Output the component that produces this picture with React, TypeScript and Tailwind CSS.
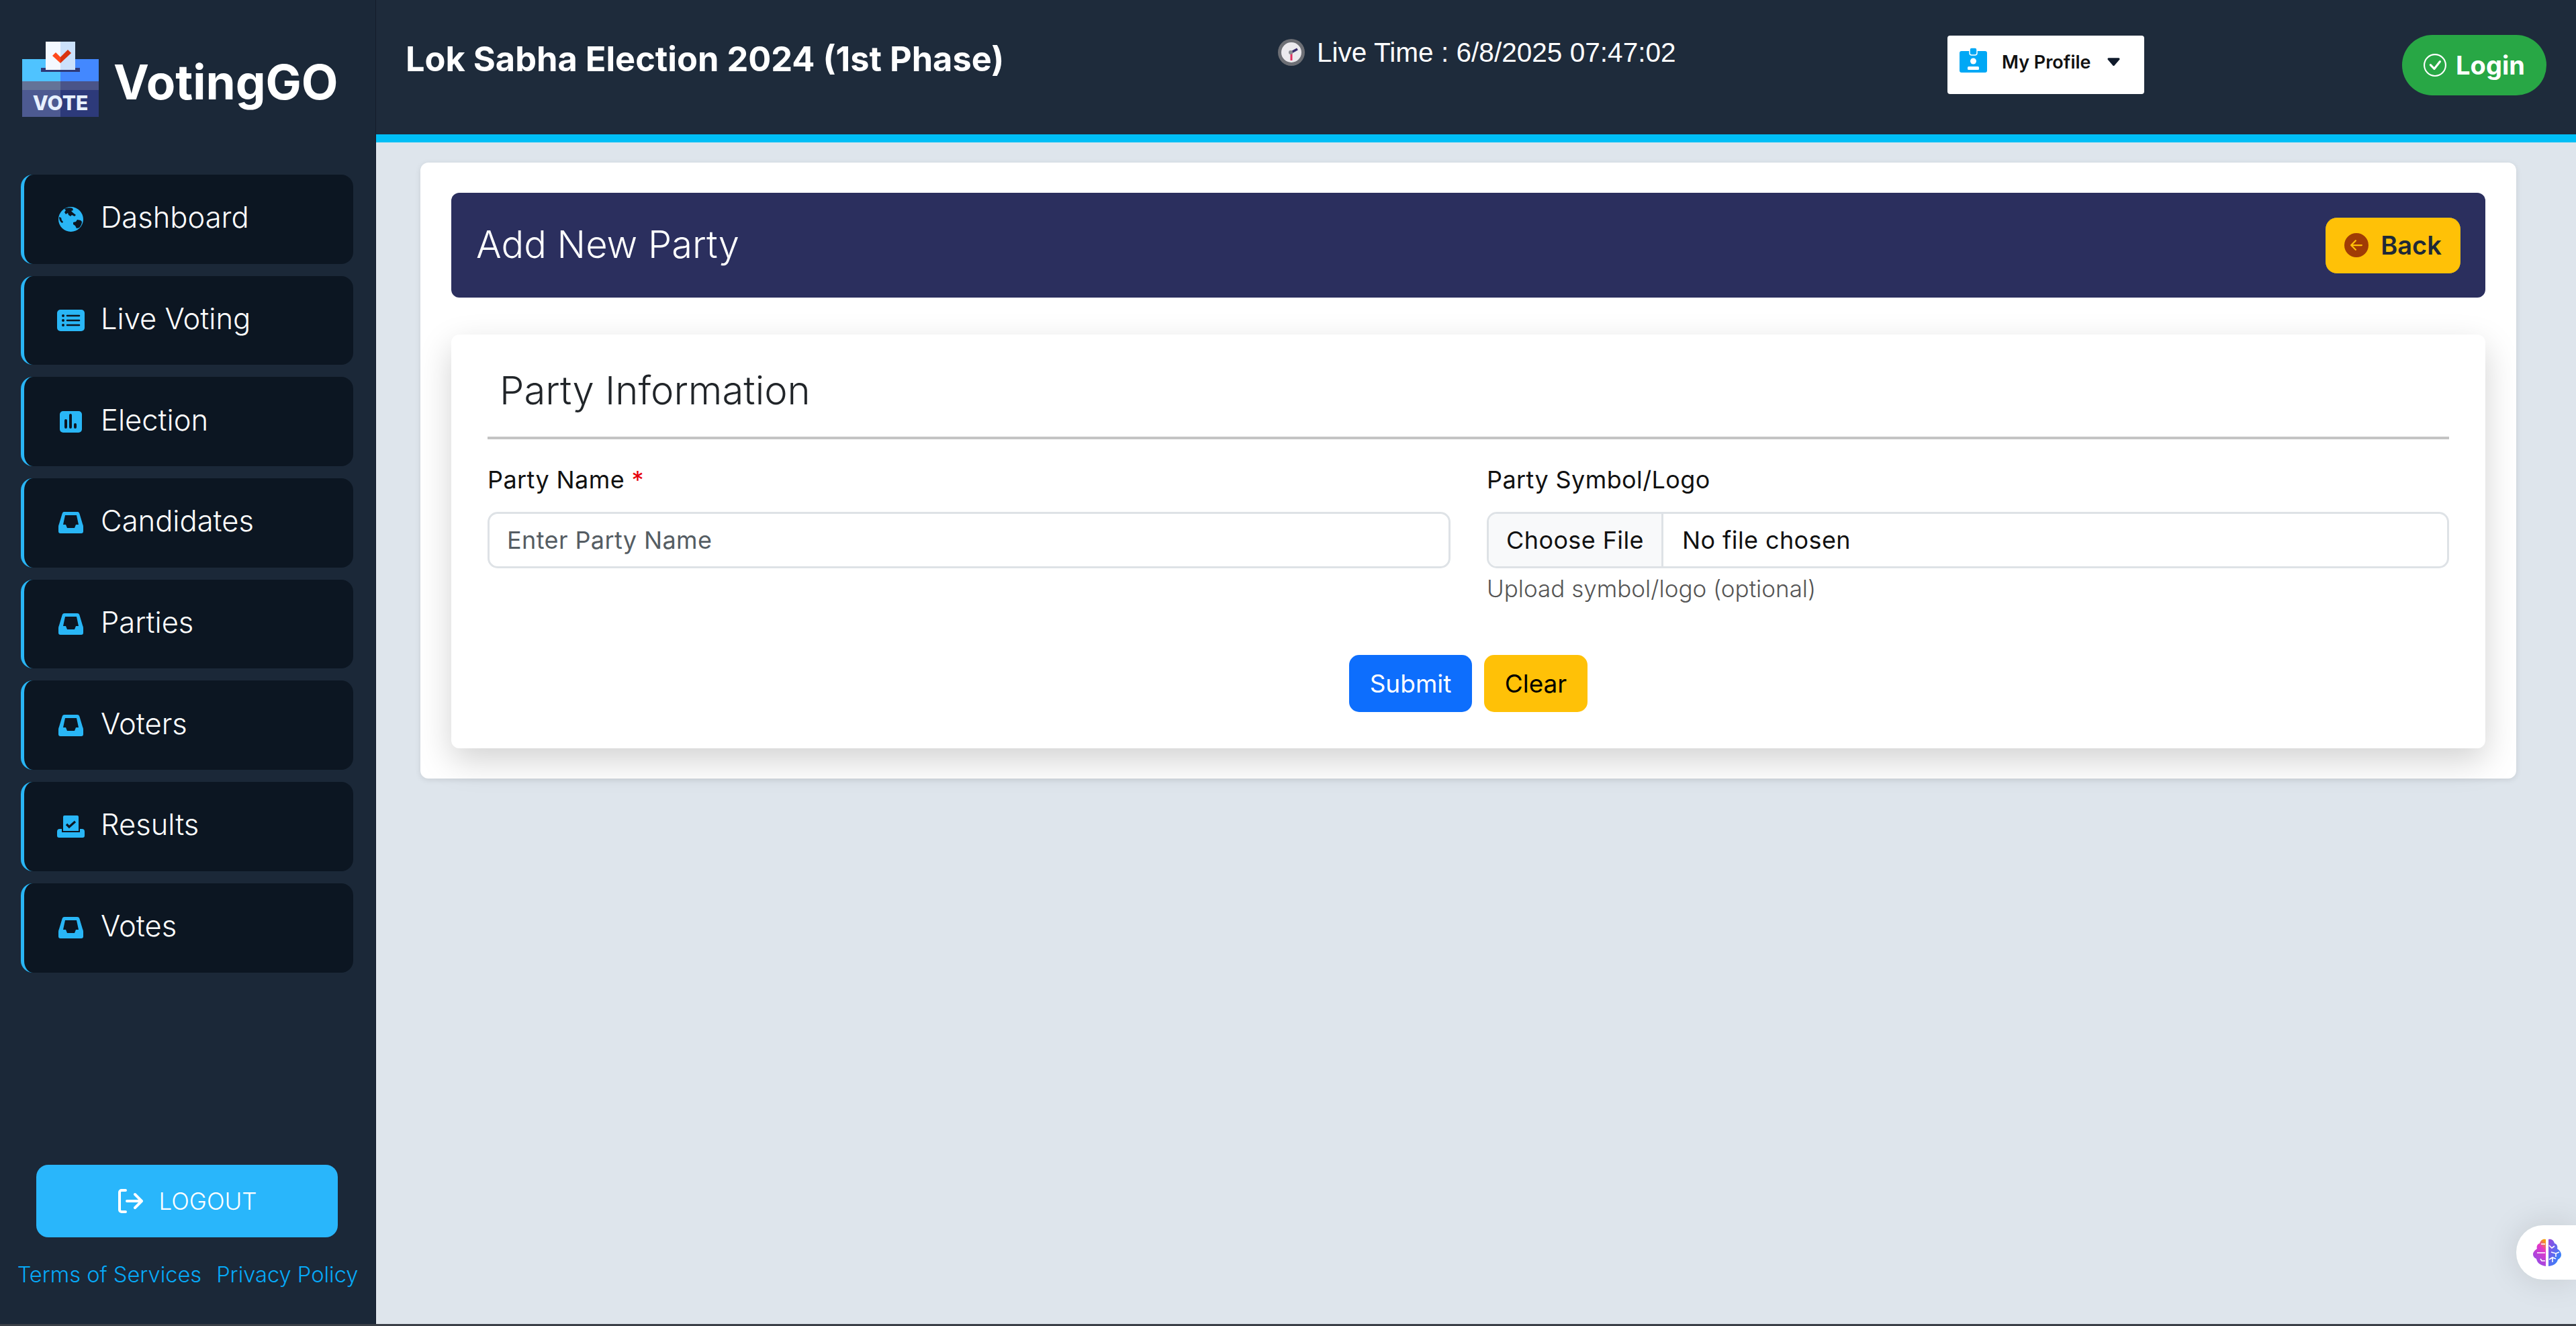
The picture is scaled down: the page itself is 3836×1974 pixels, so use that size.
import React from 'react';
import { BsArrowLeftCircleFill, BsCaretDownFill, BsCheckCircle } from 'react-icons/bs';

function GlobeIcon() {
  return (
    <svg width="37" height="37" viewBox="0 0 37 37">
      <circle cx="18.5" cy="18.5" r="18.5" fill="#29b6f6" />
      <path d="M11 2c3-1 8-1 10 0l1 3-3 1 3 3 4 3-2 2-4-2-2 2-3-2-1-3-3 2-2-3 2-3-2-2z" fill="#0c1622" />
      <path d="M22 23l4-1 2-3 5 1 2 2c0 3-2 7-4 9l-4 1-2-4-3-2z" fill="#0c1622" />
      <path d="M1 15l3 1 1 4 2 2-1 2-2-1c-2-2-3-5-3-8z" fill="#0c1622" />
    </svg>
  );
}

function ListIcon() {
  return (
    <svg width="41" height="32" viewBox="0 0 41 32">
      <rect width="41" height="32" rx="5" fill="#29b6f6" />
      <circle cx="9" cy="9" r="2" fill="#0c1622" />
      <circle cx="9" cy="16" r="2" fill="#0c1622" />
      <circle cx="9" cy="23" r="2" fill="#0c1622" />
      <path d="M15 9h18M15 16h18M15 23h18" stroke="#0c1622" strokeWidth="2.6" strokeLinecap="round" />
    </svg>
  );
}

function BarsIcon() {
  return (
    <svg width="33" height="32" viewBox="0 0 33 32">
      <rect width="33" height="32" rx="5" fill="#29b6f6" />
      <path d="M9 14v10M16 6v18M23 20v4" stroke="#0c1622" strokeWidth="4" strokeLinecap="round" />
    </svg>
  );
}

function TrayIcon() {
  return (
    <svg width="37" height="32" viewBox="0 0 37 32">
      <path
        fillRule="evenodd"
        d="M9 0h19c2 0 3 1 3.500 3L36 18q1 2 1 4v7c0 2-1 3-3 3H3c-2 0-3-1-3-3v-7q0-2 1-4L5.500 3C6 1 7 0 9 0zM10 5L7 19h4l2 5h11l2-5h4L27 5z"
        fill="#29b6f6"
      />
    </svg>
  );
}

function VoteYeaIcon() {
  return (
    <svg width="41" height="33" viewBox="0 0 41 33">
      <path d="M9 2q0-2 2-2h19q2 0 2 2v21H9z" fill="#29b6f6" />
      <path d="M14 13l4 4 9-8" stroke="#0c1622" strokeWidth="3.200" fill="none" />
      <path d="M4 20h3v5h27v-5h3q4 0 4 4v6q0 3-3 3H3q-3 0-3-3v-6q0-4 4-4z" fill="#29b6f6" />
    </svg>
  );
}

function BadgeIcon() {
  return (
    <svg width="41" height="37" viewBox="0 0 41 37">
      <rect y="5" width="41" height="32" rx="3" fill="#00a8f5" />
      <rect x="15" y="0" width="11" height="11" rx="3" fill="#00a8f5" stroke="#fff" strokeWidth="1.500" />
      <ellipse cx="20.500" cy="20" rx="4.500" ry="4.500" fill="#fff" />
      <rect x="12" y="28" width="17" height="5" rx="1.500" fill="#fff" />
    </svg>
  );
}

const navItems = [
  { label: 'Dashboard', icon: <GlobeIcon /> },
  { label: 'Live Voting', icon: <ListIcon /> },
  { label: 'Election', icon: <BarsIcon /> },
  { label: 'Candidates', icon: <TrayIcon /> },
  { label: 'Parties', icon: <TrayIcon /> },
  { label: 'Voters', icon: <TrayIcon /> },
  { label: 'Results', icon: <VoteYeaIcon /> },
  { label: 'Votes', icon: <TrayIcon /> },
];

function VoteLogo() {
  return (
    <svg width="114" height="112" viewBox="0 0 114 112" className="shrink-0">
      <rect x="0" y="26" width="57" height="33" fill="#4fc3ff" />
      <rect x="57" y="26" width="57" height="33" fill="#4388ff" />
      <rect x="28" y="39" width="58" height="6" fill="#2e3a78" />
      <rect x="35" y="0" width="22" height="42" fill="#f4f9ff" />
      <rect x="57" y="0" width="22" height="42" fill="#cbe1fb" />
      <path d="M45 21l5-5 7 7 v9z" fill="#ff4a1c" />
      <path d="M57 23l11-11 5 5-16 15z" fill="#d9330f" />
      <rect x="0" y="59" width="57" height="13" fill="#647397" />
      <rect x="57" y="59" width="57" height="13" fill="#4a5488" />
      <rect x="0" y="72" width="57" height="40" fill="#4d5a91" />
      <rect x="57" y="72" width="57" height="40" fill="#2d3a7a" />
      <text x="57" y="102" textAnchor="middle" fontSize="30" fontWeight="800" fill="#e8f1ff" fontFamily="Inter, sans-serif">VOTE</text>
    </svg>
  );
}

function ClockIcon() {
  return (
    <svg width="40" height="40" viewBox="0 0 40 40">
      <circle cx="20" cy="20" r="20" fill="#6d6f75" />
      <circle cx="20" cy="20" r="15" fill="#eceaee" />
      <path d="M20 20l9-5" stroke="#3a2d6c" strokeWidth="3.500" />
      <path d="M20 20v12" stroke="#e0305f" strokeWidth="3" />
      <circle cx="19" cy="20" r="3" fill="#8b8d92" />
    </svg>
  );
}

function BrainIcon() {
  return (
    <svg width="44" height="42" viewBox="0 0 44 42">
      <defs>
        <linearGradient id="brainLeft" x1="0.8" y1="0" x2="0.3" y2="1">
          <stop offset="0" stopColor="#f59e0b" />
          <stop offset="0.3" stopColor="#e535c8" />
          <stop offset="1" stopColor="#8a4fe8" />
        </linearGradient>
        <linearGradient id="brainRight" x1="0" y1="0" x2="1" y2="1">
          <stop offset="0" stopColor="#9a45e0" />
          <stop offset="1" stopColor="#1e90ff" />
        </linearGradient>
      </defs>
      <path d="M20 1c-5-1-8 2-9 6-4 1-5 5-4 8-3 2-6 5-6 8 0 4 3 6 5 7 1 5 4 9 14 11z" fill="url(#brainLeft)" />
      <path d="M24 1c5-1 8 2 9 6 4 1 5 5 4 8 3 2 6 5 6 9 0 4-3 6-5 7-1 5-5 9-14 10z" fill="url(#brainRight)" />
      <path d="M19 8h-6M19 21H7M19 33h-5l-2-3M25 10l4 4 4-3M28 20l7 2 5-2M35 22v5M25 31l5-3 5 2M30 28v7" stroke="#fff" strokeWidth="1.600" fill="none" />
    </svg>
  );
}

function LogoutIcon() {
  return (
    <svg width="38" height="38" viewBox="0 0 38 38" fill="none" stroke="#fff" strokeWidth="4" strokeLinecap="round" strokeLinejoin="round">
      <path d="M12 3H6a3 3 0 0 0-3 3v26a3 3 0 0 0 3 3h6" />
      <path d="M14 19h21M26 9l10 10-10 10" />
    </svg>
  );
}

export default function App() {
  return (
    <div className="flex flex-col h-[1974px] w-full overflow-hidden font-['Inter',sans-serif] bg-[#dee5ec]">
      <div className="flex flex-1 min-h-0">
        <aside className="w-[560px] shrink-0 bg-[#1b2838] border-r border-[#141c2b] flex flex-col">
          <div className="flex gap-[22px] pl-[33px] pt-[62px] h-[260px] items-start">
            <VoteLogo />
            <span className="text-[71px] font-bold text-white leading-none mt-[25px]">VotingGO</span>
          </div>
          <nav className="flex flex-col gap-[18px] pl-[31px] pr-[33px]">
            {navItems.map((item) => (
              <div key={item.label} className="h-[132.7px] bg-[#0c1622] rounded-[18px] border-l-[5px] border-[#29b6f6] flex items-center pl-[49px] text-white">
                <span className="w-[41px] shrink-0 flex justify-center">{item.icon}</span>
                <span className="ml-[24px] -mt-[5px] text-[43.5px] font-light">{item.label}</span>
              </div>
            ))}
          </nav>
          <div className="mt-auto flex flex-col items-center">
            <button className="w-[449px] h-[108px] ml-[-2px] bg-[#29b6fb] rounded-[18px] text-white text-[35px] font-light flex items-center justify-center gap-[24px]">
              <LogoutIcon />
              LOGOUT
            </button>
            <div className="flex gap-[22px] mt-[31px] mb-[50px] text-[32.6px] font-light text-[#06aaf8] leading-[48px]">
              <span>Terms of Services</span>
              <span>Privacy Policy</span>
            </div>
          </div>
        </aside>

        <div className="flex-1 min-w-0 flex flex-col relative">
          <header className="h-[212px] shrink-0 bg-[#1e2b3b] border-b-[12px] border-[#00bff6] flex items-start pl-[44px] pr-[44px] text-white">
            <h1 className="w-[1299px] shrink-0 text-[50.5px] font-bold mt-[56px] leading-[64px]">Lok Sabha Election 2024 (1st Phase)</h1>
            <div className="w-[997px] shrink-0 flex items-center gap-[18px] mt-[58px] font-['Liberation_Sans',sans-serif] text-[40.6px] leading-[40px]">
              <ClockIcon />
              <span>Live Time : 6/8/2025 07:47:02</span>
            </div>
            <button className="w-[293px] h-[87px] mt-[53px] bg-white rounded-[4px] text-[#111] flex items-start pl-[18px] pt-[18px] text-[27px] font-semibold shrink-0">
              <BadgeIcon />
              <span className="ml-[22px] mt-[2px] leading-[40px]">My Profile</span>
              <BsCaretDownFill size={25} className="ml-[21px] mt-[9px] text-[#0f1a2b]" />
            </button>
            <button className="ml-auto w-[215px] h-[90px] mt-[52px] bg-[#28a745] rounded-full flex items-center justify-center gap-[14px] text-[38px] font-bold shrink-0">
              <BsCheckCircle size={34} />
              Login
            </button>
          </header>

          <main className="px-[66px] pt-[30px] pr-[89px]">
            <section className="bg-white rounded-[12px] shadow-[0_2px_8px_rgba(0,0,0,0.1)] px-[46px] pt-[45px] pb-[45px]">
              <div className="h-[156px] bg-[#2b2f5e] rounded-[12px] flex items-center justify-between pl-[37px] pr-[36px]">
                <h2 className="text-[56px] font-light text-white -mt-[3px]">Add New Party</h2>
                <button className="w-[203px] h-[85px] bg-[#ffc107] border border-[#1a2a6c] rounded-[18px] flex items-center justify-center gap-[18px] text-[38px] font-semibold text-[#1f2937]">
                  <BsArrowLeftCircleFill size={36} className="text-[#a03c05]" />
                  Back
                </button>
              </div>

              <div className="mt-[55px] rounded-[12px] bg-white shadow-[0_18px_50px_rgba(0,0,0,0.18)] px-[54px] pt-[45px] pb-[54px]">
                <h3 className="pl-[18px] text-[58px] font-light text-[#212529] leading-[76px] pb-[31px] border-b-[4px] border-[#c4c4c4]">Party Information</h3>
                <div className="grid grid-cols-[1434px_1fr] gap-x-[54px] mt-[34px]">
                  <div>
                    <label className="block text-[36px] tracking-[0.4px] text-[#111] leading-[52px] mb-[22px]">
                      Party Name <span className="text-red-600">*</span>
                    </label>
                    <input placeholder="Enter Party Name" className="w-full h-[84px] border-[3px] border-[#dee2e6] rounded-[15px] px-[26px] text-[36px] tracking-[0.4px] placeholder:text-[#555d63] outline-none" />
                  </div>
                  <div>
                    <label className="block text-[36px] tracking-[0.4px] text-[#111] leading-[52px] mb-[22px]">Party Symbol/Logo</label>
                    <div className="flex h-[84px] border-[3px] border-[#dee2e6] rounded-[15px] overflow-hidden text-[36px] tracking-[0.4px] text-[#111]">
                      <span className="w-[260px] shrink-0 bg-[#f8f9fa] border-r-[3px] border-[#dee2e6] flex items-center justify-center">Choose File</span>
                      <span className="flex items-center pl-[28px]">No file chosen</span>
                    </div>
                    <p className="mt-[7px] text-[35px] font-light text-[#555] leading-[46px]">Upload symbol/logo (optional)</p>
                  </div>
                </div>
                <div className="flex justify-center gap-[18px] mt-[76px]">
                  <button className="w-[183px] h-[85px] bg-[#0d6efd] rounded-[15px] text-white text-[37px]">Submit</button>
                  <button className="w-[154px] h-[85px] bg-[#ffc107] rounded-[15px] text-black text-[37px]">Clear</button>
                </div>
              </div>
            </section>
          </main>

          <div className="absolute right-0 top-[1824px] w-[89px] h-[81px] bg-white rounded-l-[40px] shadow-[0_0_50px_rgba(0,0,0,0.12)] flex items-center pl-[24px]">
            <BrainIcon />
          </div>
        </div>
      </div>
      <div className="h-[3px] bg-[#3a3f47] shrink-0" />
    </div>
  );
}
